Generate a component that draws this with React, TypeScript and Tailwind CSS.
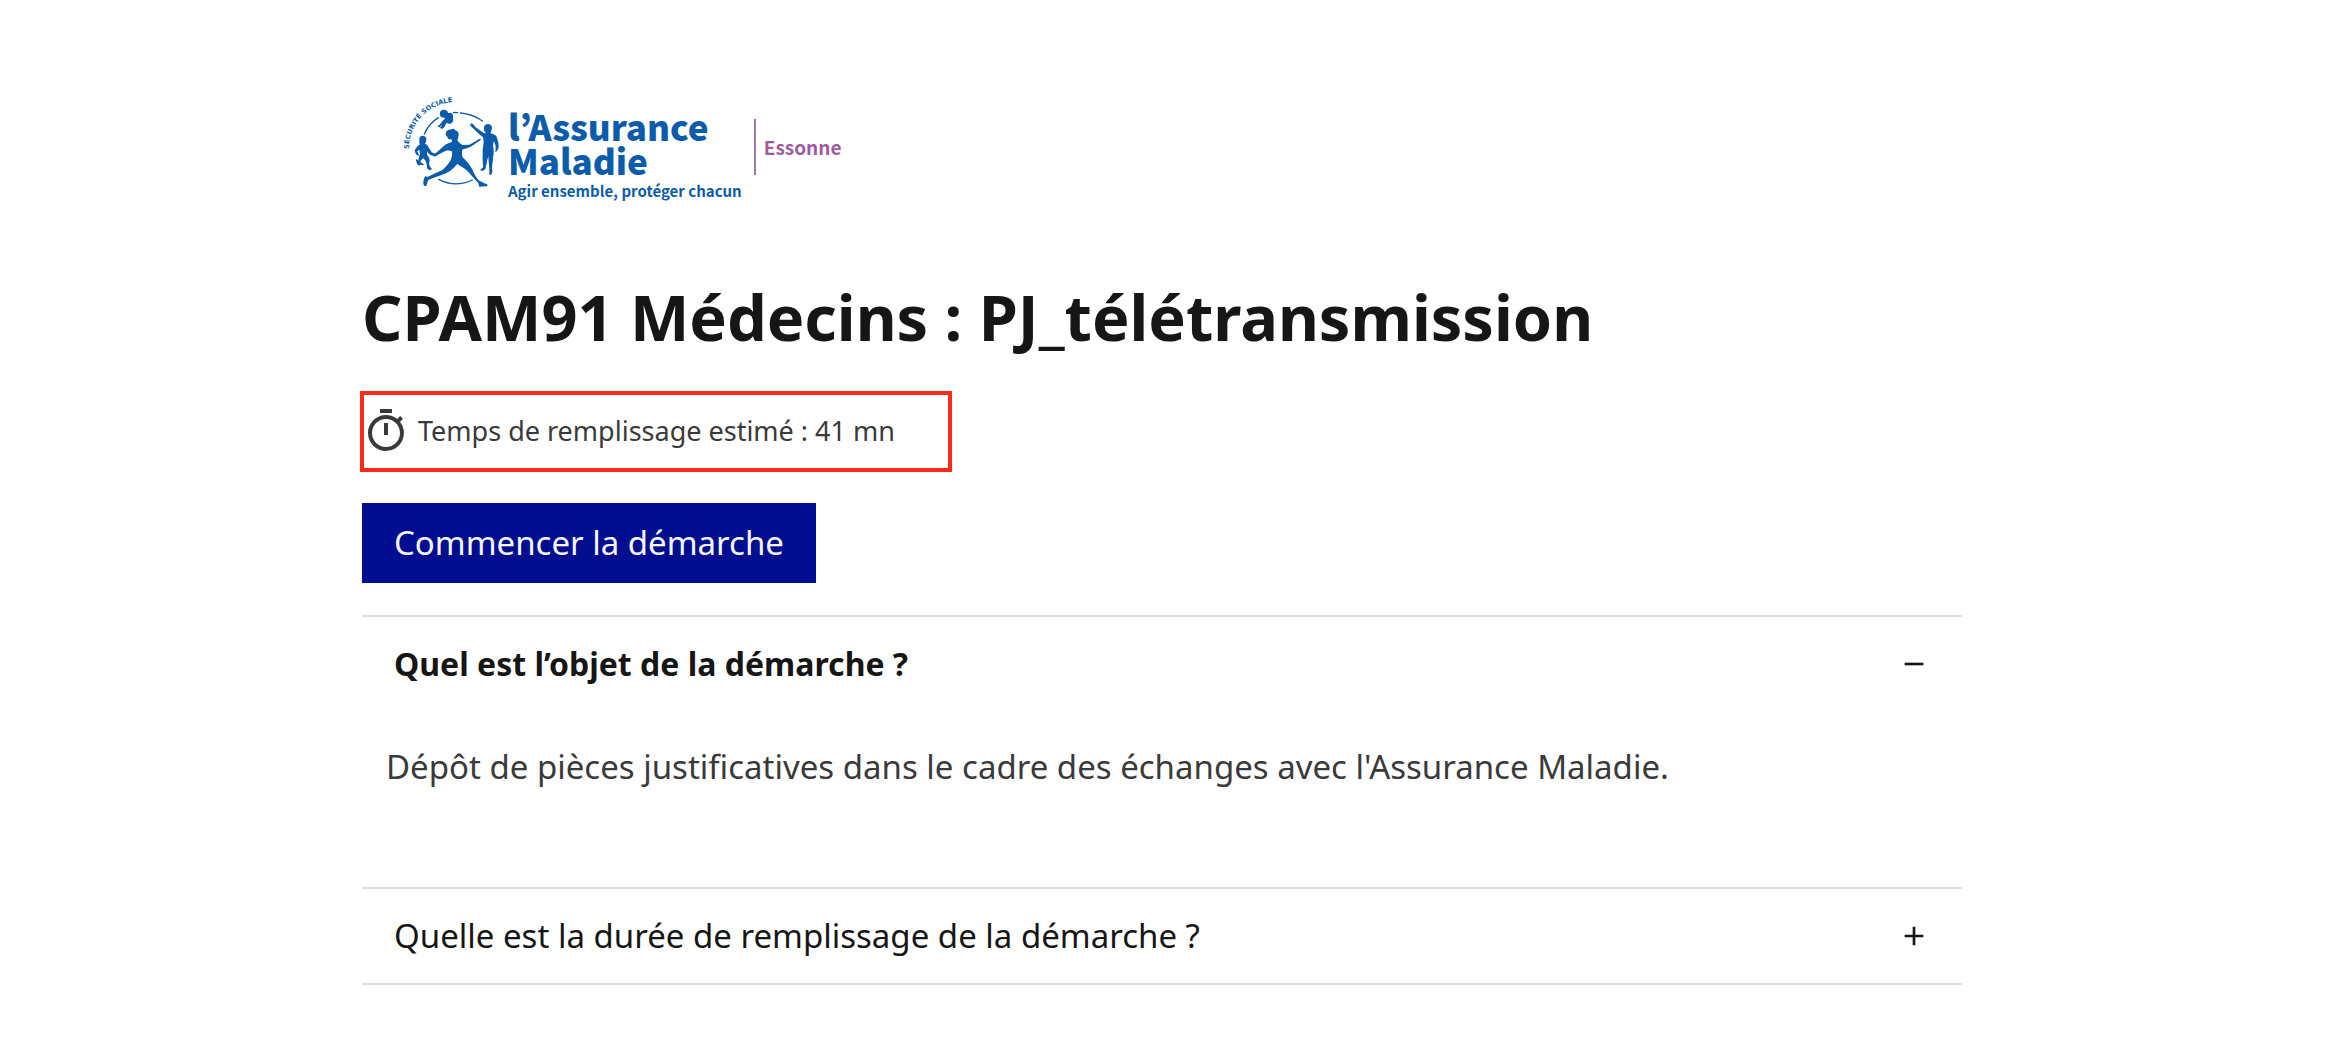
import { useState } from "react";
import { MdOutlineTimer } from "react-icons/md";
import { RiAddLine, RiSubtractLine } from "react-icons/ri";

type Section = {
  id: string;
  title: string;
  body: string;
};

const SECTIONS: Section[] = [
  {
    id: "objet",
    title: "Quel est l’objet de la démarche ?",
    body: "Dépôt de pièces justificatives dans le cadre des échanges avec l'Assurance Maladie.",
  },
  {
    id: "duree",
    title: "Quelle est la durée de remplissage de la démarche ?",
    body: "Le temps de remplissage est estimé à 41 mn.",
  },
];

function LogoMark() {
  return (
    <svg
      viewBox="0 0 360 360"
      className="h-[120px] w-[120px] shrink-0"
      fill="#0c5cab"
      aria-hidden="true"
    >
      <path id="arc" d="M57 192A139 139 0 0 1 210 52" fill="none" />
      <text className="font-['DejaVu_Sans',sans-serif] text-[20px] font-bold">
        <textPath href="#arc">SÉCURITÉ SOCIALE</textPath>
      </text>

      {/* ring */}
      <g fill="none" stroke="#0c5cab" strokeWidth="4" strokeLinecap="round">
        <path d="M103 147Q117 115 145 98" />
        <path d="M190 83Q196 82 203 83" />
        <path d="M211 84Q249 87 277 108" />
        <path d="M146 283Q196 309 247 285" />
      </g>

      {/* baby */}
      <path d="M150 89C148 80 153 74 161 74C169 74 174 79 174 84L183 83C189 86 190 92 189 98C190 106 189 112 184 115C178 118 173 116 169 113C167 119 164 125 160 130C157 133 153 130 150 129C151 126 155 124 157 120L150 125C146 129 143 126 144 123C149 120 153 115 157 109C159 105 162 103 166 102L160 97C154 98 150 94 150 89Z" />

      {/* left child */}
      <path d="M88 164C87 156 92 152 98 152C105 152 110 157 109 164C109 170 106 174 104 176C109 178 113 181 116 187L125 202L136 206C140 207 141 213 136 214L121 210C116 206 113 202 111 198L112 211C116 216 119 220 119 226C117 235 117 242 121 247C126 250 127 254 122 255C117 256 113 252 111 248C111 239 109 231 105 225L99 220C95 224 92 227 91 231L97 235C101 237 103 240 100 241L91 239C90 240 88 240 87 242C83 241 80 233 78 227L79 222C82 223 83 226 85 227C86 219 87 212 90 206L88 194L82 199C84 205 88 209 86 212C79 211 76 204 74 197C77 189 83 182 90 178C87 174 88 169 88 164Z" />

      {/* woman */}
      <path d="M173 157C170 154 166 150 167 145C168 137 176 133 183 134C187 129 195 132 195 136C203 137 207 144 206 151C205 158 202 163 203 167C207 172 212 177 218 180L238 179L258 168C263 163 269 160 273 163C271 168 265 170 260 173L242 185C232 190 223 191 217 194C215 204 216 211 218 217C229 228 239 239 246 251C251 263 257 275 266 286C273 290 281 294 291 298C295 302 292 305 286 304L268 305C265 302 268 297 263 292C247 276 235 258 222 250L202 237C190 250 178 263 160 268L116 284C111 288 113 296 109 302C105 305 101 302 100 296C99 288 102 280 106 273L112 276L157 255C168 247 174 236 181 228C186 217 187 206 186 199L174 196C161 198 150 208 136 214C131 216 128 211 132 208C145 200 155 188 168 178L185 171C187 167 186 164 182 163C177 163 172 162 173 157Z" />

      {/* man */}
      <path d="M283 137C279 125 284 118 294 117C304 118 308 125 305 134C304 138 302 142 301 145C309 147 317 150 320 155C323 165 326 174 326 184C326 191 322 198 317 201C314 199 317 196 317 193L317 182L311 168L309 184C312 196 312 206 309 218C309 230 306 239 306 250C308 258 308 266 302 270C297 271 297 266 298 262C299 244 295 230 295 214L291 228C291 238 287 244 286 252C283 257 276 259 271 256C270 253 276 251 279 247C279 235 277 220 278 208C277 194 280 181 281 170L279 156C269 149 260 140 251 131C245 126 239 121 239 117L245 119L242 113C249 115 253 121 256 126L281 144L289 145C287 143 284 140 283 137Z" />
    </svg>
  );
}

function Logo() {
  return (
    <div className="flex items-center pl-7 font-['Noto_Sans_CJK_KR',sans-serif]">
      <LogoMark />
      <div className="-ml-0.5 pt-6 text-[#0c5cab]">
        <p className="text-[35px] leading-[34px] font-black">l’Assurance</p>
        <p className="text-[35px] leading-[34px] font-black">Maladie</p>
        <p className="text-[15px] leading-7 font-bold">
          Agir ensemble, protéger chacun
        </p>
      </div>
      <p className="mt-1 ml-3 flex h-14 items-center border-l-2 border-[#a873ac] pl-2 text-[19px] font-bold text-[#9f5aa0]">
        Essonne
      </p>
    </div>
  );
}

export default function App() {
  const [open, setOpen] = useState<string | null>("objet");

  return (
    <div className="bg-white pr-7 font-['Noto_Sans',sans-serif]">
      <main className="mx-auto max-w-[1600px] pt-[85px] pb-14 text-[33px] text-[#161616]">
        <Logo />

        <h1 className="mt-[72px] text-[63px] leading-[80px] font-bold">
          CPAM91 Médecins : PJ_télétransmission
        </h1>

        <div className="mt-[34px] -ml-0.5 flex h-[81px] max-w-[592px] items-center gap-2 border-4 border-[#ff2a1c] pb-0.5 text-[27px] text-[#3a3a3a]">
          <MdOutlineTimer className="-ml-0.5 size-12 shrink-0" />
          <p className="pt-0.5">Temps de remplissage estimé : 41 mn</p>
        </div>

        <button
          type="button"
          className="mt-[31px] h-20 bg-[#000e8f] px-8 text-[#f5f5fe]"
        >
          Commencer la démarche
        </button>

        <div className="mt-8 border-b-2 border-[#dddddd]">
          {SECTIONS.map((section) => {
            const expanded = open === section.id;
            return (
              <section key={section.id} className="border-t-2 border-[#dddddd]">
                <h2>
                  <button
                    type="button"
                    aria-expanded={expanded}
                    aria-controls={section.id}
                    onClick={() => setOpen(expanded ? null : section.id)}
                    className={`flex h-[94px] w-full items-center justify-between px-8 text-left ${
                      expanded ? "text-[32px] font-bold" : ""
                    }`}
                  >
                    {section.title}
                    {expanded ? (
                      <RiSubtractLine className="size-8" />
                    ) : (
                      <RiAddLine className="size-8" />
                    )}
                  </button>
                </h2>
                {expanded && (
                  <p
                    id={section.id}
                    className="px-6 pt-8 pb-24 leading-[48px] text-[#3a3a3a]"
                  >
                    {section.body}
                  </p>
                )}
              </section>
            );
          })}
        </div>
      </main>
    </div>
  );
}
